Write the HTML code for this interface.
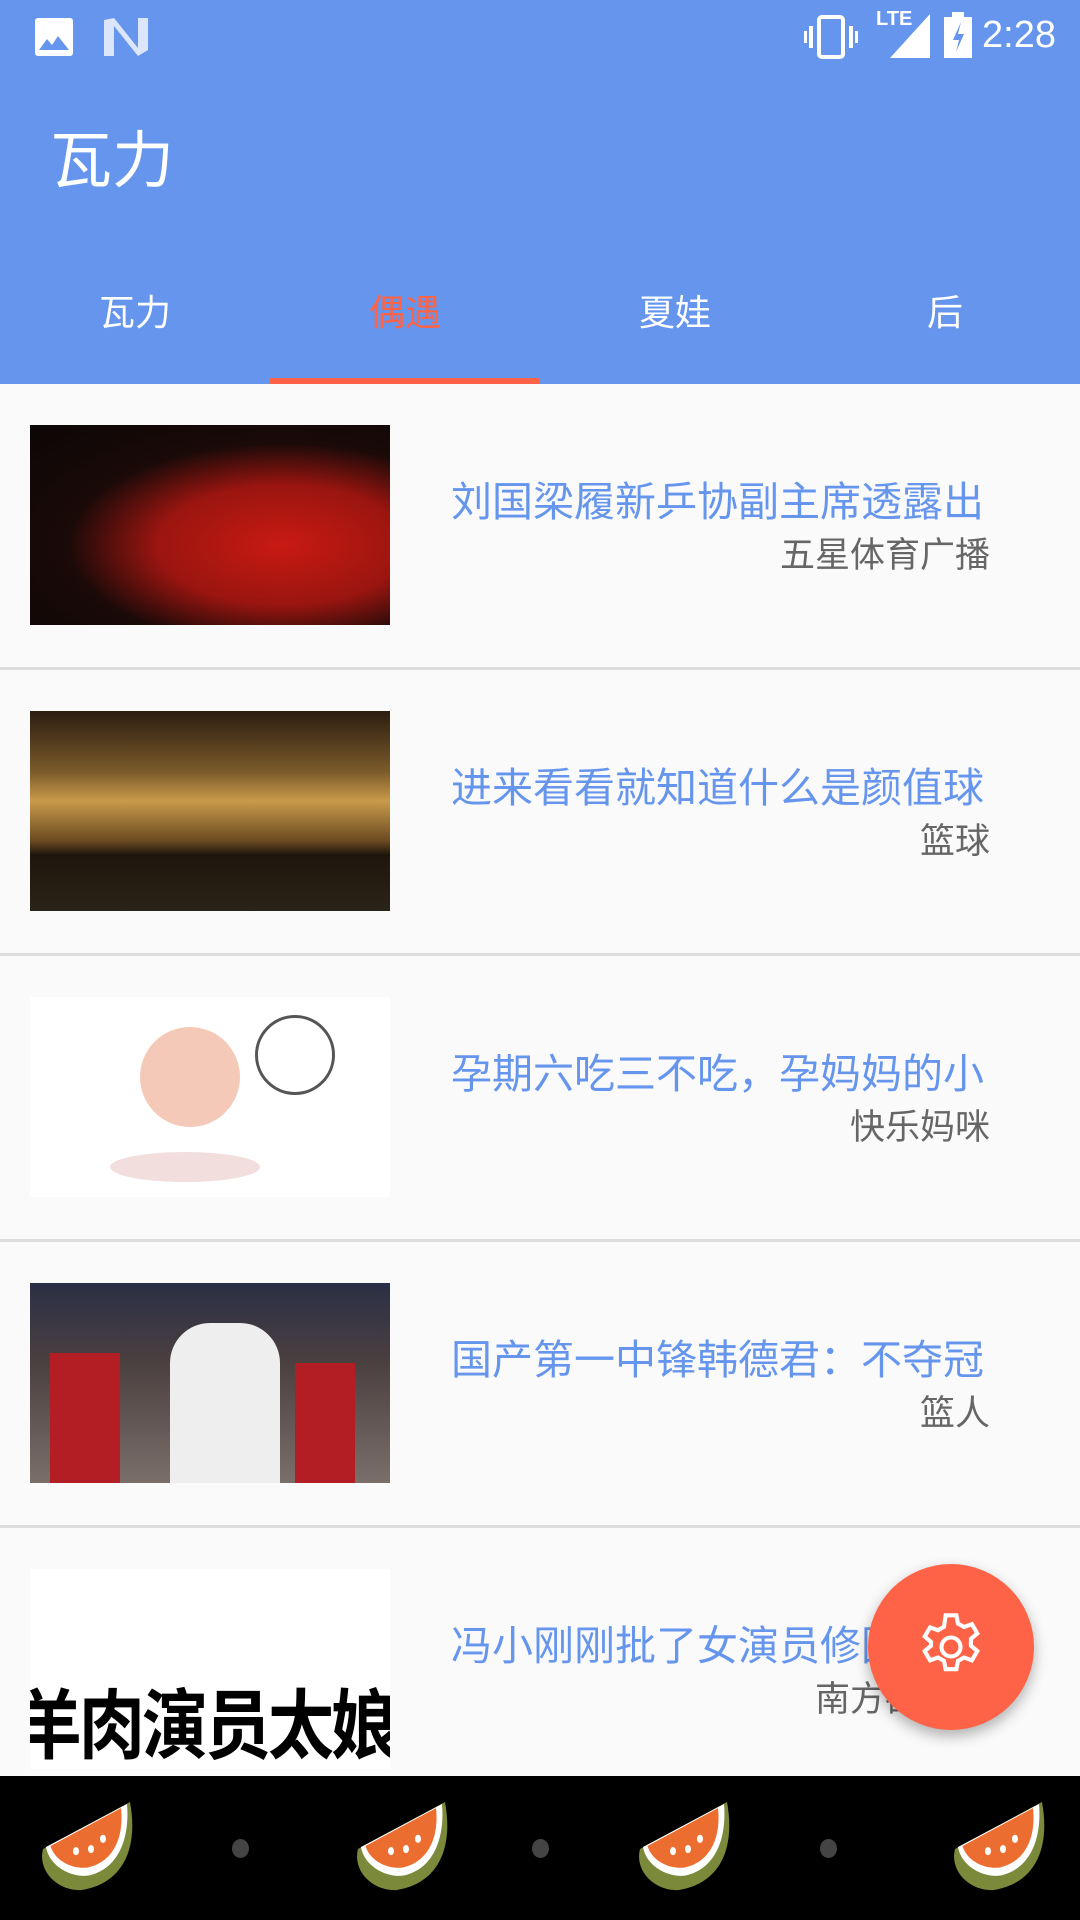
<!DOCTYPE html>
<html><head><meta charset="utf-8">
<style>
*{margin:0;padding:0;box-sizing:border-box}
body{width:1080px;height:1920px;overflow:hidden;background:#fafafa;font-family:"Liberation Sans","Noto Sans CJK SC",sans-serif;position:relative}
.top{position:absolute;left:0;top:0;width:1080px;height:384px;background:#6595EC}
.title{position:absolute;left:50px;top:110px;font-size:62px;color:#fff}
.time{position:absolute;right:24px;top:14px;font-size:38px;color:#fff}
.tab{position:absolute;top:284px;width:270px;text-align:center;font-size:36px;color:#fff}
.ind{position:absolute;left:270px;top:378px;width:270px;height:6px;background:#FF6347}
.item{position:absolute;left:0;width:1080px;height:286px;border-bottom:3px solid #ddd}
.img{position:absolute;left:30px;top:41px;width:360px;height:200px;overflow:hidden}
.t{position:absolute;left:451px;top:84px;font-size:41px;color:#6595EC;white-space:nowrap;width:545px;overflow:hidden}
.s{position:absolute;right:90px;top:143px;font-size:35px;color:#666;white-space:nowrap}
.nav{position:absolute;left:0;top:1776px;width:1080px;height:144px;background:#000}
.dot{position:absolute;top:1839px;width:17px;height:19px;border-radius:50%;background:#444}
.fab{position:absolute;left:868px;top:1564px;width:166px;height:166px;border-radius:50%;background:#FF6347;box-shadow:0 6px 14px rgba(0,0,0,.3)}
.wm{position:absolute;top:1802px;width:96px;height:90px}
</style></head><body>
<div class="top"></div>
<svg style="position:absolute;left:34px;top:17px" width="40" height="40" viewBox="0 0 40 40"><rect x="1" y="1" width="38" height="38" rx="3" fill="#fff"/><path d="M5 33 L13 22 L18 28 L24 19 L35 33Z" fill="#6595EC"/></svg>
<svg style="position:absolute;left:104px;top:18px" width="44" height="38" viewBox="0 0 44 38"><path d="M0 2 L10 0 L34 30 L34 0 L44 0 L44 32 L34 38 L10 8 L10 38 L0 38Z" fill="#dbe6fa"/></svg>
<svg style="position:absolute;left:804px;top:14px" width="56" height="46" viewBox="0 0 56 46"><rect x="15" y="3" width="24" height="40" rx="3" fill="none" stroke="#fff" stroke-width="4"/><rect x="5" y="12" width="4" height="22" fill="#fff"/><rect x="45" y="12" width="4" height="22" fill="#fff"/><rect x="0" y="17" width="3" height="12" fill="#fff"/><rect x="51" y="17" width="3" height="12" fill="#fff"/></svg>
<div style="position:absolute;left:876px;top:8px;font-size:20px;color:#fff;font-weight:bold">LTE</div>
<svg style="position:absolute;left:890px;top:14px" width="40" height="44" viewBox="0 0 40 44"><path d="M40 0 L40 44 L0 44Z" fill="#fff"/></svg>
<svg style="position:absolute;left:944px;top:12px" width="30" height="46" viewBox="0 0 30 46"><rect x="0" y="5" width="28" height="41" fill="#fff"/><rect x="8" y="0" width="12" height="6" fill="#fff"/><path d="M17 10 L9 28 L15 28 L12 40 L20 22 L14 22Z" fill="#6595EC"/></svg>
<div class="time">2:28</div>
<div class="title">瓦力</div>
<div class="tab" style="left:0">瓦力</div>
<div class="tab" style="left:270px;color:#FF6347">偶遇</div>
<div class="tab" style="left:540px">夏娃</div>
<div class="tab" style="left:810px">后</div>
<div class="ind"></div>

<div class="item" style="top:384px"><div class="img" style="background:radial-gradient(ellipse at 70% 60%,#c81a12 0,#9b1510 35%,#1a0a08 60%,#0b0606 100%)"></div><div class="t">刘国梁履新乒协副主席透露出</div><div class="s">五星体育广播</div></div>
<div class="item" style="top:670px"><div class="img" style="background:linear-gradient(#2a1d10 0,#7a5a2a 30%,#c89a4a 45%,#6a4a20 65%,#1e160c 72%,#2a2418 100%)"></div><div class="t">进来看看就知道什么是颜值球</div><div class="s">篮球</div></div>
<div class="item" style="top:956px"><div class="img" style="background:#fff"><div style="position:absolute;left:110px;top:30px;width:100px;height:100px;border-radius:50%;background:#f5c9b8"></div><div style="position:absolute;left:225px;top:18px;width:80px;height:80px;border-radius:50%;border:3px solid #555"></div><div style="position:absolute;left:80px;top:155px;width:150px;height:30px;border-radius:50%;background:#f3dede"></div></div><div class="t">孕期六吃三不吃，孕妈妈的小</div><div class="s">快乐妈咪</div></div>
<div class="item" style="top:1242px"><div class="img" style="background:linear-gradient(#2b2f45 0,#4b4040 40%,#7a6f6a 100%)"><div style="position:absolute;left:140px;top:40px;width:110px;height:160px;background:#eee;border-radius:40px 40px 0 0"></div><div style="position:absolute;left:20px;top:70px;width:70px;height:130px;background:#b21e24"></div><div style="position:absolute;left:265px;top:80px;width:60px;height:120px;background:#b21e24"></div></div><div class="t">国产第一中锋韩德君：不夺冠</div><div class="s">篮人</div></div>
<div class="item" style="top:1528px;border:none"><div class="img" style="background:#fff"><div style="position:absolute;left:-14px;top:96px;font-size:66px;font-weight:bold;color:#000;white-space:nowrap;letter-spacing:-3px;transform:scaleY(1.15);transform-origin:top">羊肉演员太娘</div></div><div class="t">冯小刚刚批了女演员修图</div><div class="s">南方都市报</div></div>

<div class="fab"><svg style="position:absolute;left:45px;top:45px" width="76" height="76" viewBox="0 0 24 24"><path fill="none" stroke="#fff" stroke-width="1.3" d="M10.3 2h3.4l.5 2.6 1.9 1.1 2.5-.9 1.7 2.9-2 1.7v2.2l2 1.7-1.7 2.9-2.5-.9-1.9 1.1-.5 2.6h-3.4l-.5-2.6-1.9-1.1-2.5.9-1.7-2.9 2-1.7V10.4l-2-1.7 1.7-2.9 2.5.9 1.9-1.1z"/><circle cx="12" cy="12" r="3" fill="none" stroke="#fff" stroke-width="1.3"/></svg></div>

<div class="nav"></div>
<svg width="0" height="0" style="position:absolute"><defs><g id="wm"><path d="M8 46 C4 70 20 88 34 86 C60 80 72 48 66 0 Z" fill="#7a8a3a"/><path d="M10 44 C12 62 26 74 38 72 C58 66 66 36 64 2 Z" fill="#fff"/><path d="M13 43 C16 58 28 66 38 64 C56 58 62 32 60 6 Z" fill="#ec6d30"/><ellipse cx="30" cy="48" rx="2" ry="4" fill="#fff"/><ellipse cx="40" cy="46" rx="2" ry="4" fill="#fff"/><ellipse cx="48" cy="36" rx="2" ry="4" fill="#fff"/></g></defs></svg>
<svg class="wm" style="left:37px" viewBox="4 0 64 88" preserveAspectRatio="none"><use href="#wm"/></svg>
<svg class="wm" style="left:352px" viewBox="4 0 64 88" preserveAspectRatio="none"><use href="#wm"/></svg>
<svg class="wm" style="left:634px" viewBox="4 0 64 88" preserveAspectRatio="none"><use href="#wm"/></svg>
<svg class="wm" style="left:949px" viewBox="4 0 64 88" preserveAspectRatio="none"><use href="#wm"/></svg>
<div class="dot" style="left:232px"></div>
<div class="dot" style="left:532px"></div>
<div class="dot" style="left:820px"></div>
</body></html>
